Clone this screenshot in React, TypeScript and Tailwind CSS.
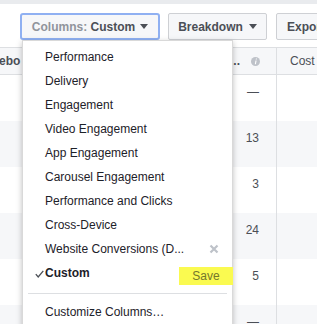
import React from "react";

const rows = ["—", "13", "3", "24", "5", "—"];

const items = [
  "Performance",
  "Delivery",
  "Engagement",
  "Video Engagement",
  "App Engagement",
  "Carousel Engagement",
  "Performance and Clicks",
  "Cross-Device",
];

function Caret() {
  return (
    <svg width="8" height="5" viewBox="0 0 8 5" className="shrink-0">
      <path d="M0 0h8L4 5z" fill="#4b4f56" />
    </svg>
  );
}

function InfoIcon() {
  return (
    <svg width="9" height="9" viewBox="0 0 9 9">
      <circle cx="4.5" cy="4.5" r="4.5" fill="#bec2c9" />
      <path d="M4.9 1.6h1.1l-.2 1H4.7zM4.5 3.6h1.1l-.7 3.6H3.8z" fill="#fff" />
    </svg>
  );
}

export default function App() {
  return (
    <div className="relative h-[324px] w-[317px] overflow-hidden bg-white font-['Liberation_Sans',Arial,sans-serif] text-[12px] text-[#1d2129]">
      {/* toolbar */}
      <div className="flex h-[47px] items-start gap-[8px] border-t-[4px] border-[#e9ebee] pl-[20px] pt-[9px]">
        <button className="flex h-[27px] w-[140px] shrink-0 items-center justify-center gap-[5px] rounded-[3px] border-2 border-[#8fb0f2] bg-[#f6f7f9] font-bold">
          <span>
            <span className="text-[#90949c]">Columns: </span>
            <span className="text-[#4b4f56]">Custom</span>
          </span>
          <Caret />
        </button>
        <button className="flex h-[27px] w-[99px] shrink-0 items-center justify-center gap-[6px] rounded-[2px] border border-[#ced0d4] bg-[#f6f7f9] font-bold text-[#4b4f56]">
          Breakdown
          <Caret />
        </button>
        <button className="ml-[1px] flex h-[27px] w-[90px] shrink-0 items-center rounded-[2px] border border-[#ced0d4] bg-[#f6f7f9] pl-[10px] font-bold text-[#4b4f56]">
          Export
        </button>
      </div>

      {/* table */}
      <div className="grid h-[28px] grid-cols-[120px_157px_1fr] border-y border-[#dddfe2] bg-[#f6f7f9] text-[#4b4f56]">
        <div className="flex items-center font-bold">
          <span className="ml-[-1px]">ebo</span>
        </div>
        <div className="flex items-center justify-end gap-[11px] border-r border-[#dddfe2] pr-[16px]">
          <span className="font-bold">...</span>
          <InfoIcon />
        </div>
        <div className="flex items-center pl-[13px]">Cost</div>
      </div>
      {rows.map((v, i) => (
        <div
          key={i}
          className={
            "grid h-[46px] grid-cols-[120px_157px_1fr] " +
            (i % 2 === 1 ? "bg-[#f6f7f9]" : "bg-white")
          }
        >
          <div />
          <div className="border-r border-[#dddfe2] pr-[17px] pt-[10px] text-right leading-[14px] text-[#4b4f56]">
            {v}
          </div>
          <div />
        </div>
      ))}

      {/* dropdown */}
      <div className="absolute left-[22px] top-[40px] h-[300px] w-[211px] border border-[rgba(0,0,0,0.15)] bg-white pt-[4px] shadow-[0_2px_6px_rgba(0,0,0,0.25)]">
        {items.map((t) => (
          <div key={t} className="flex h-[24px] items-center pl-[22px]">
            {t}
          </div>
        ))}
        <div className="relative flex h-[24px] items-center pl-[22px]">
          Website Conversions (D...
          <svg width="10" height="10" viewBox="0 0 10 10" className="absolute right-[13px] top-[7px]">
            <path d="M1.5 1.5l7 7M8.5 1.5l-7 7" stroke="#bec2c9" strokeWidth="2.2" />
          </svg>
        </div>
        <div className="relative flex h-[24px] items-center pl-[22px] font-bold">
          <svg width="9" height="8" viewBox="0 0 9 8" className="absolute left-[12px] top-[9px]">
            <path d="M0.8 4.2l2.4 2.8L8.3 0.8" stroke="#4b4f56" strokeWidth="1.3" fill="none" />
          </svg>
          Custom
          <div className="absolute right-[-1px] top-[6px] flex h-[18px] w-[54px] items-center justify-center bg-[#fafa50] font-normal text-[#74762c]">
            Save
          </div>
        </div>
        <div className="mx-[5px] mb-[6px] mt-[8px] h-px bg-[#dddfe2]" />
        <div className="flex h-[24px] items-center pl-[22px]">Customize Columns…</div>
      </div>
    </div>
  );
}
